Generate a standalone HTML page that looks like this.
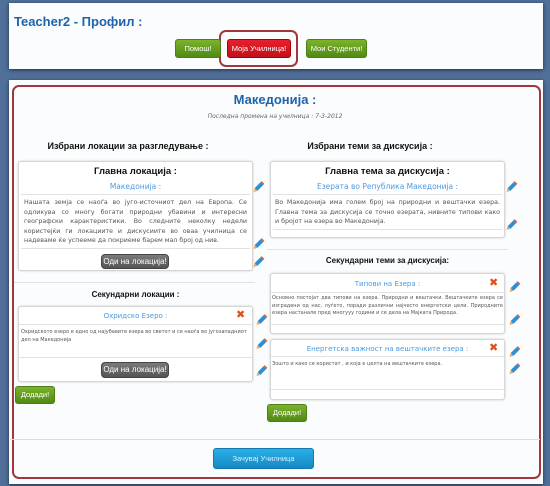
<!DOCTYPE html>
<html><head><meta charset="utf-8"><style>
*{margin:0;padding:0;box-sizing:border-box}
body{width:550px;height:486px;overflow:hidden;position:relative;background:#50709a;font-family:"DejaVu Sans","Liberation Sans",sans-serif;}
.a{position:absolute}
.panel{position:absolute;background:#fbfcfd;box-shadow:0 1px 4px rgba(0,0,0,.6)}
.btn{position:absolute;border-radius:3px;color:#fff;font-size:7.5px;text-align:center;font-family:"Liberation Sans",sans-serif}
.g{background:linear-gradient(#7cb32c,#4f8a12);border:1px solid #4c7f16}
.r{background:linear-gradient(#e8202a,#c2101a);border:1px solid #a00}
.d{background:linear-gradient(#7a7a7a,#555);border:1px solid #444;border-radius:4px;font-size:8px}
.b{background:linear-gradient(#2ab0e6,#1688c4);border:1px solid #1478b0;color:#d8f0ff}
.box{position:absolute;border:1px solid #d6d6d6;border-radius:3px;background:#fff;box-shadow:0 0 2px #ccc}
.hr{position:absolute;height:1px;background:#e2e2e2}
.h{position:absolute;font-weight:bold;font-size:9px;color:#111;text-align:center;font-family:"Liberation Sans",sans-serif}
.lk{position:absolute;color:#4c9ae0;font-size:7.5px;text-align:center}
.t{position:absolute;color:#555;font-size:6.3px;line-height:9.6px;text-align:justify}
.ts{position:absolute;color:#555;font-size:5px;line-height:8px}
.p{position:absolute;width:12px;height:12px}
.x{position:absolute;color:#e0501c;font-size:11px;font-weight:bold;line-height:10px}
</style></head><body>
<div class="panel" style="left:9px;top:3px;width:534px;height:66px"></div>
<div class="a" style="left:14px;top:14px;font-size:13px;font-weight:bold;color:#1d63ad;font-family:'Liberation Sans',sans-serif">Teacher2 - Профил :</div>
<div class="a" style="left:219px;top:30px;width:79px;height:37px;border:2px solid #a3363a;border-radius:7px"></div>
<div class="btn g" style="left:175px;top:39px;width:46px;height:19px;line-height:17px">Помош!</div>
<div class="btn r" style="left:227px;top:39px;width:64px;height:19px;line-height:17px">Моја Училница!</div>
<div class="btn g" style="left:306px;top:39px;width:61px;height:19px;line-height:17px">Мои Студенти!</div>

<div class="panel" style="left:9px;top:80px;width:534px;height:404px"></div>
<div class="a" style="left:12px;top:85px;width:529px;height:394px;border:2px solid #a3363a;border-radius:7px"></div>
<div class="a" style="left:0;width:550px;top:92px;text-align:center;font-size:13px;font-weight:bold;color:#1d63ad;font-family:'Liberation Sans',sans-serif">Македонија :</div>
<div class="a" style="left:0;width:550px;top:113px;text-align:center;font-size:6px;font-style:italic;color:#666">Последна промена на училница : 7-3-2012</div>
<div class="h" style="left:28px;width:200px;top:141px">Избрани локации за разгледување :</div>
<div class="h" style="left:270px;width:200px;top:141px">Избрани теми за дискусија :</div>

<!-- left main -->
<div class="box" style="left:18px;top:161px;width:235px;height:110px"></div>
<div class="h" style="left:18px;width:235px;top:166px;font-size:9.5px">Главна локација :</div>
<div class="lk" style="left:18px;width:235px;top:182px">Македонија :</div>
<div class="hr" style="left:21px;width:229px;top:194px"></div>
<div class="t" style="left:24px;width:223px;top:198px">Нашата земја се наоѓа во југо-источниот дел на Европа. Се одликува со многу богати природни убавини и интересни географски карактеристики. Во следните неколку недели користејќи ги локациите и дискусиите во оваа училница се надеваме ќе успееме да покриеме барем мал број од нив.</div>
<div class="hr" style="left:21px;width:229px;top:248px"></div>
<div class="btn d" style="left:101px;top:254px;width:68px;height:15px;line-height:13px">Оди на локација!</div>
<div class="hr" style="left:14px;width:241px;top:282px"></div>
<div class="h" style="left:18px;width:235px;top:290px;font-size:8px">Секундарни локации :</div>
<div class="box" style="left:18px;top:306px;width:235px;height:76px"></div>
<div class="lk" style="left:18px;width:235px;top:312px;font-size:7px">Охридско Езеро :</div>
<div class="x" style="left:236px;top:310px">✖</div>
<div class="hr" style="left:19px;width:233px;top:324px"></div>
<div class="ts" style="left:21px;width:229px;top:328px">Охридското езеро е едно од најубавите езера во светот и се наоѓа во југозападниот дел на Македонија</div>
<div class="hr" style="left:19px;width:233px;top:357px"></div>
<div class="btn d" style="left:101px;top:362px;width:68px;height:16px;line-height:14px">Оди на локација!</div>
<div class="btn g" style="left:15px;top:386px;width:40px;height:18px;line-height:16px">Додади!</div>

<!-- right main -->
<div class="box" style="left:270px;top:161px;width:235px;height:77px"></div>
<div class="h" style="left:270px;width:235px;top:166px;font-size:9.5px">Главна тема за дискусија :</div>
<div class="lk" style="left:270px;width:235px;top:182px">Езерата во Република Македонија :</div>
<div class="hr" style="left:273px;width:229px;top:194px"></div>
<div class="t" style="left:275px;width:225px;top:198px">Во Македонија има голем број на природни и вештачки езера. Главна тема за дискусија се точно езерата, нивните типови како и бројот на езера во Македонија.</div>
<div class="hr" style="left:273px;width:229px;top:229px"></div>
<div class="hr" style="left:267px;width:241px;top:249px"></div>
<div class="h" style="left:270px;width:235px;top:256px;font-size:8px">Секундарни теми за дискусија:</div>
<div class="box" style="left:270px;top:273px;width:235px;height:61px"></div>
<div class="lk" style="left:270px;width:235px;top:280px;font-size:7px">Типови на Езера :</div>
<div class="x" style="left:489px;top:278px">✖</div>
<div class="hr" style="left:271px;width:233px;top:292px"></div>
<div class="ts" style="left:272px;width:231px;top:295px;text-align:justify;line-height:7.5px">Основно постојат два типови на езера. Природни и вештачки. Вештачките езера се изградени од нас, луѓето, поради различни најчесто енергетски цели. Природните езера настанале пред многууу години и се дела на Мајката Природа.</div>
<div class="hr" style="left:271px;width:233px;top:324px"></div>
<div class="box" style="left:270px;top:339px;width:235px;height:61px"></div>
<div class="lk" style="left:270px;width:235px;top:345px;font-size:7px">Енергетска важност на вештачките езера :</div>
<div class="x" style="left:489px;top:343px">✖</div>
<div class="hr" style="left:271px;width:233px;top:356px"></div>
<div class="ts" style="left:272px;width:231px;top:360px">Зошто и како се користат , и која е целта на вештачките езера.</div>
<div class="hr" style="left:271px;width:233px;top:389px"></div>
<div class="btn g" style="left:267px;top:404px;width:40px;height:18px;line-height:16px">Додади!</div>

<div class="hr" style="left:10px;width:530px;top:439px;background:#ddd"></div>
<div class="btn b" style="left:213px;top:448px;width:101px;height:21px;line-height:19px">Зачувај Училница</div>

<svg width="0" height="0" style="position:absolute"><defs><g id="pc"><path d="M1.5 7.5 L7 2 L9.5 4.5 L4 10 Z" fill="#2a8fd6"/><path d="M7 2 L8 1 L10.5 3.5 L9.5 4.5 Z" fill="#e25d2a"/><path d="M1.5 7.5 L4 10 L0.5 11 Z" fill="#e8a860"/></g></defs></svg>
<svg class="p" style="left:253px;top:180px" viewBox="0 0 11 11"><use href="#pc"/></svg>
<svg class="p" style="left:253px;top:237px" viewBox="0 0 11 11"><use href="#pc"/></svg>
<svg class="p" style="left:253px;top:255px" viewBox="0 0 11 11"><use href="#pc"/></svg>
<svg class="p" style="left:256px;top:313px" viewBox="0 0 11 11"><use href="#pc"/></svg>
<svg class="p" style="left:256px;top:337px" viewBox="0 0 11 11"><use href="#pc"/></svg>
<svg class="p" style="left:256px;top:364px" viewBox="0 0 11 11"><use href="#pc"/></svg>
<svg class="p" style="left:506px;top:180px" viewBox="0 0 11 11"><use href="#pc"/></svg>
<svg class="p" style="left:506px;top:218px" viewBox="0 0 11 11"><use href="#pc"/></svg>
<svg class="p" style="left:509px;top:280px" viewBox="0 0 11 11"><use href="#pc"/></svg>
<svg class="p" style="left:509px;top:313px" viewBox="0 0 11 11"><use href="#pc"/></svg>
<svg class="p" style="left:509px;top:345px" viewBox="0 0 11 11"><use href="#pc"/></svg>
<svg class="p" style="left:509px;top:362px" viewBox="0 0 11 11"><use href="#pc"/></svg>
</body></html>
